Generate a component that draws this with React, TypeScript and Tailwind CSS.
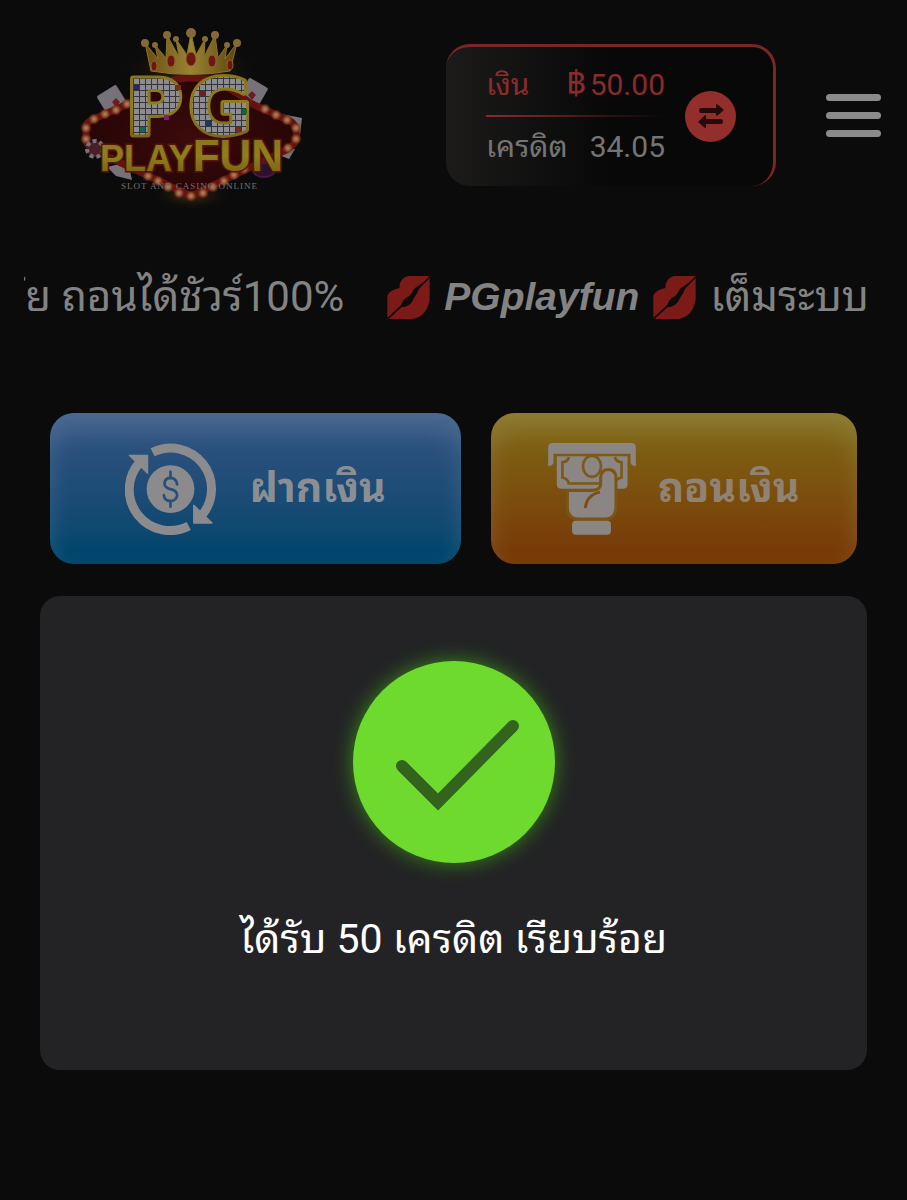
import type { ReactNode } from "react";

const crownGems = [
  { x: 84, y: 36, r: 3 },
  { x: 101, y: 31, r: 4 },
  { x: 121, y: 29, r: 5 },
  { x: 142, y: 31, r: 4 },
  { x: 160, y: 35, r: 3 },
];

const crownBalls = [
  [75, 13, 4],
  [85, 15, 3],
  [97, 5, 4],
  [106, 9, 3],
  [121, 3, 5],
  [135, 9, 3],
  [145, 5, 4],
  [157, 15, 3],
  [167, 13, 4],
];

const signBulbs = [
  [16, 113], [24, 104], [35, 99], [46, 95], [57, 89],
  [195, 94], [206, 100], [217, 105], [226, 113], [226, 124], [218, 133],
  [16, 124], [78, 161], [88, 166], [98, 172], [109, 178], [121, 181],
  [133, 178], [143, 172], [154, 166], [164, 160], [174, 154],
];

const colouredTiles = [
  { x: 64, y: 70, fill: "#2a2470" },
  { x: 106, y: 70, fill: "#7c2a16" },
  { x: 94, y: 100, fill: "#7b1f78" },
  { x: 70, y: 112, fill: "#17694e" },
  { x: 130, y: 76, fill: "#6e2019" },
  { x: 172, y: 94, fill: "#136a35" },
  { x: 136, y: 106, fill: "#1c356b" },
  { x: 166, y: 112, fill: "#7c2a16" },
];

function Logo() {
  return (
    <svg viewBox="0 0 250 200" className="h-[200px] w-[250px] shrink-0" role="img" aria-label="PG Playfun">
      <defs>
        <linearGradient id="gold" x1="0" y1="0" x2="0" y2="1">
          <stop offset="0" stopColor="#85701f" />
          <stop offset="0.5" stopColor="#8f7f1a" />
          <stop offset="1" stopColor="#75590f" />
        </linearGradient>
        <linearGradient id="crown" x1="0" y1="0" x2="1" y2="0">
          <stop offset="0" stopColor="#6b4c14" />
          <stop offset="0.5" stopColor="#9a8433" />
          <stop offset="1" stopColor="#5f4310" />
        </linearGradient>
        <radialGradient id="board">
          <stop offset="0" stopColor="#3d0a0a" />
          <stop offset="1" stopColor="#260507" />
        </radialGradient>
        <radialGradient id="bulb">
          <stop offset="0" stopColor="#a6916a" />
          <stop offset="0.5" stopColor="#8f4a2b" />
          <stop offset="1" stopColor="#6b1512" stopOpacity="0" />
        </radialGradient>
        <radialGradient id="halo">
          <stop offset="0" stopColor="#6e4a12" stopOpacity="0.6" />
          <stop offset="1" stopColor="#0b0b0b" stopOpacity="0" />
        </radialGradient>
        <pattern id="tiles" width="6" height="6" patternUnits="userSpaceOnUse" x="64" y="64">
          <rect width="6" height="6" fill="#34343c" />
          <rect width="5" height="5" fill="#8d8d90" />
        </pattern>
      </defs>

      <ellipse cx="121" cy="54" rx="72" ry="26" fill="url(#halo)" />
      <ellipse cx="121" cy="180" rx="42" ry="16" fill="url(#halo)" />

      {/* playing cards and chips tucked behind the sign */}
      <g fill="#77727a">
        <rect x="31" y="74" width="23" height="25" rx="2" transform="rotate(-32 42 86)" />
        <rect x="171" y="66" width="22" height="27" rx="2" transform="rotate(30 182 80)" />
        <path d="M211 99 232 103 230 120 212 116z" />
        <path d="M214 132 225 134 219 144 209 140z" />
        <path d="M37 152 58 147 62 165 46 161z" />
      </g>
      <path d="M46 83l4 4-4 5-4-5zM182 76l4 4-4 5-4-5z" fill="#6f1a1e" />

      <path
        d="M16 113Q14 108 24 104L60 88Q121 38 180 88L220 106Q228 110 226 125Q224 132 210 138L121 181L30 138Q16 132 16 124z"
        fill="url(#board)"
        stroke="#64130f"
        strokeWidth="7"
        strokeLinejoin="round"
      />
      {signBulbs.map(([x, y]) => (
        <circle key={`${x}-${y}`} cx={x} cy={y} r="6" fill="url(#bulb)" />
      ))}
      <circle cx="25" cy="134" r="8" fill="#4a2028" stroke="#77727a" strokeWidth="4" strokeDasharray="4 3" />
      <ellipse cx="194" cy="155" rx="11" ry="7" fill="#2b1030" stroke="#4a1743" strokeWidth="2" />

      <g transform="translate(0 15)">
        <path
          d="M81 41 75 13 88 29 85 15 96 28 97 5 109 27 106 9 117 25 121 3 126 25 135 9 134 27 145 5 148 28 157 15 155 29 167 13 160 41Q121 48 81 41z"
          fill="url(#crown)"
          stroke="#8d732a"
        />
        {crownBalls.map(([x, y, r]) => (
          <circle key={x} cx={x} cy={y} r={r} fill="#866a35" />
        ))}
        {crownGems.map((gem) => (
          <ellipse
            key={gem.x}
            cx={gem.x}
            cy={gem.y}
            rx={gem.r}
            ry={gem.r + 2}
            fill="#6d1613"
            stroke="#8d6a20"
          />
        ))}
      </g>

      <text
        x="56"
        y="119"
        fontFamily='"DejaVu Sans", sans-serif'
        fontSize="77"
        fontWeight="700"
        fill="url(#tiles)"
        stroke="url(#gold)"
        strokeWidth="6"
        paintOrder="stroke"
        strokeLinejoin="round"
      >
        P<tspan dx="6">G</tspan>
      </text>
      {colouredTiles.map((tile) => (
        <rect key={`${tile.x}-${tile.y}`} x={tile.x} y={tile.y} width="5" height="5" fill={tile.fill} />
      ))}

      <text
        x="30"
        y="156"
        fontFamily='"Liberation Sans", Arial, sans-serif'
        fontSize="36"
        fontWeight="700"
        fill="url(#gold)"
        stroke="#54150a"
        strokeWidth="3"
        paintOrder="stroke"
      >
        PLAY<tspan fontSize="44">FUN</tspan>
      </text>
      <text
        x="51"
        y="174"
        fontFamily='"Liberation Serif", serif'
        fontSize="9"
        fill="#77736f"
        className="tracking-[1px]"
      >
        SLOT AND CASINO ONLINE
      </text>
    </svg>
  );
}

function Wallet() {
  return (
    <section className="flex h-[142px] w-[330px] items-center rounded-3xl border-t-3 border-r-3 border-[#7a2625] bg-linear-to-r from-[#1c1b1a] to-[#080808] to-50% pr-[37px] pb-px pl-10">
      <div className="flex-1 text-[30px] leading-[40px]">
        <div className="flex justify-between pb-[10px] text-[#8a2b2b]">
          <span>เงิน</span>
          <span className="flex items-baseline gap-1">
            <span className="text-[34px] leading-none">฿</span>50.00
          </span>
        </div>
        <div className="h-[2px] bg-linear-to-r from-[#8a2b2b] to-transparent" />
        <div className="flex justify-between pt-[10px] text-[#747474]">
          <span>เครดิต</span>
          <span>34.05</span>
        </div>
      </div>
      <button
        type="button"
        aria-label="สลับกระเป๋า"
        className="ml-5 flex size-[51px] items-center justify-center rounded-full bg-[#932e2b]"
      >
        <svg viewBox="0 0 26 24" className="h-6 w-[26px]" fill="#240b0b">
          <path d="M3 4h15V1q0-1 1-1l7 6-7 6q-1 0-1-1V9H3Q1 9 1 6.500T3 4zM23 15H8v-3q0-1-1-1l-7 7 7 6q1 0 1-1v-3h15q2 0 2-2.500T23 15z" />
        </svg>
      </button>
    </section>
  );
}

function MenuButton() {
  return (
    <button type="button" aria-label="เมนู" className="flex w-[55px] flex-col gap-[11px]">
      <span className="h-[7px] rounded-full bg-[#8b8b8b]" />
      <span className="h-[7px] rounded-full bg-[#8b8b8b]" />
      <span className="h-[7px] rounded-full bg-[#8b8b8b]" />
    </button>
  );
}

function Lips() {
  return (
    <svg viewBox="0 0 126 128" className="size-[43px] shrink-0" aria-hidden="true">
      <path
        d="M0 122V58Q8 42 36 36Q36 6 62 0H122Q126 0 126 5V70Q118 120 76 128H6Q0 128 0 122z"
        fill="#7c1a18"
      />
      <path
        d="M126 0Q108 20 92 30Q80 34 74 48Q68 60 54 66Q44 74 40 88L0 124L4 128L42 93Q64 92 74 76Q80 62 88 52Q92 40 98 34L126 6z"
        fill="#0b0b0b"
      />
    </svg>
  );
}

function Marquee() {
  return (
    <div className="mr-[38px] ml-6 flex items-center justify-end overflow-hidden text-[42px] leading-[72px] whitespace-nowrap text-[#838383]">
      <span>ภัย ถอนได้ชัวร์100%</span>
      <span className="ml-[43px] flex items-center gap-[14px]">
        <Lips />
        <span className="font-['Liberation_Sans',Arial,sans-serif] text-[39px] font-bold italic">PGplayfun</span>
        <Lips />
        <span>เต็มระบบ</span>
      </span>
    </div>
  );
}

function DepositIcon() {
  return (
    <svg viewBox="254 128 274 275" className="h-[92px] w-[91px] shrink-0" aria-hidden="true">
      <g fill="none" stroke="#8b8a8d" strokeWidth="27">
        <path d="M337 155A123 123 0 0 1 486 344" />
        <path d="M446 377A123 123 0 0 1 296 188" />
      </g>
      <g fill="#8b8a8d" stroke="#8b8a8d" strokeWidth="4" strokeLinejoin="round">
        <path d="M267 164H322V218z" />
        <path d="M461 314V368H516z" />
      </g>
      <circle cx="391" cy="266" r="72" fill="#8b8a8d" />
      <path
        d="M391 214V232M391 301V319M411 252Q408 232 391 232Q373 233 373 250Q374 262 391 266Q410 270 411 284Q409 301 391 302Q372 301 371 284"
        fill="none"
        stroke="#24507a"
        strokeWidth="8"
        strokeLinecap="round"
      />
    </svg>
  );
}

function WithdrawIcon() {
  return (
    <svg viewBox="210 128 264 277" className="h-[92px] w-[88px] shrink-0" fill="#8b8584" aria-hidden="true">
      <path d="M224 128H460Q474 128 474 142V198Q458 197 458 186V160H226V186Q226 197 210 198V142Q210 128 224 128z" />
      <path d="M236 168H449V252Q449 266 435 266H250Q236 266 236 252z" />
      <g fill="none" stroke="#7c5919" strokeWidth="8">
        <path d="M272 170Q270 184 253 186V232Q270 236 272 250H411Q413 236 431 232V186Q413 184 411 170" />
        <ellipse cx="342" cy="198" rx="27" ry="32" />
      </g>
      {/* hand pulling the note out of the slot */}
      <path
        d="M268 271H340Q366 270 368 254V232Q370 208 391 208Q413 208 414 232V322Q412 356 384 357H302Q270 355 268 326z"
        stroke="#7b5417"
        strokeWidth="9"
      />
      <path d="M366 276Q326 284 322 324" fill="none" stroke="#7b4e14" strokeWidth="9" />
      <rect x="282" y="362" width="117" height="42" rx="11" />
    </svg>
  );
}

type ActionButtonProps = {
  icon: ReactNode;
  label: string;
  className: string;
};

function ActionButton({ icon, label, className }: ActionButtonProps) {
  return (
    <button
      type="button"
      className={`flex h-[151px] items-center justify-center rounded-3xl text-[41px] font-bold ${className}`}
    >
      {icon}
      <span>{label}</span>
    </button>
  );
}

function SuccessDialog() {
  return (
    <div
      role="alertdialog"
      aria-labelledby="result-message"
      className="mx-10 mt-8 flex h-[474px] flex-col items-center rounded-[20px] bg-[#232325] pt-[65px]"
    >
      <div className="size-[202px] rounded-full bg-[#6fda2e] shadow-[0_0_20px_#38891a]">
        <svg viewBox="0 0 202 202" fill="none" stroke="#33631c" strokeWidth="12" strokeLinecap="round" aria-hidden="true">
          <path d="M49 105 85 141 160 65" />
        </svg>
      </div>
      <p id="result-message" className="mt-10 text-[41px] leading-[72px] text-white">
        ได้รับ 50 เครดิต เรียบร้อย
      </p>
    </div>
  );
}

export default function App() {
  return (
    <div className="min-h-screen bg-[#0b0b0b] font-[Roboto,'Noto_Sans_Thai_Looped',FreeSans,sans-serif]">
      <header className="flex items-center justify-between pt-[15px] pr-[26px] pl-[70px]">
        <Logo />
        <div className="flex items-center gap-[50px]">
          <Wallet />
          <MenuButton />
        </div>
      </header>

      <main>
        <div className="pt-[46px]">
          <Marquee />
        </div>

        <div className="mt-20 grid grid-cols-[410fr_366fr] gap-[30px] px-[50px]">
          <ActionButton
            icon={<DepositIcon />}
            label="ฝากเงิน"
            className="gap-[34px] bg-linear-to-b from-[#335482] to-[#03466d] to-90% text-[#8b8f94] shadow-[inset_0_18px_24px_#ffffff20]"
          />
          <ActionButton
            icon={<WithdrawIcon />}
            label="ถอนเงิน"
            className="gap-[22px] bg-linear-to-b from-[#7d6a15] to-[#783b08] to-90% text-[#908374] shadow-[inset_0_18px_24px_#ffffff20]"
          />
        </div>

        <SuccessDialog />
      </main>
    </div>
  );
}
